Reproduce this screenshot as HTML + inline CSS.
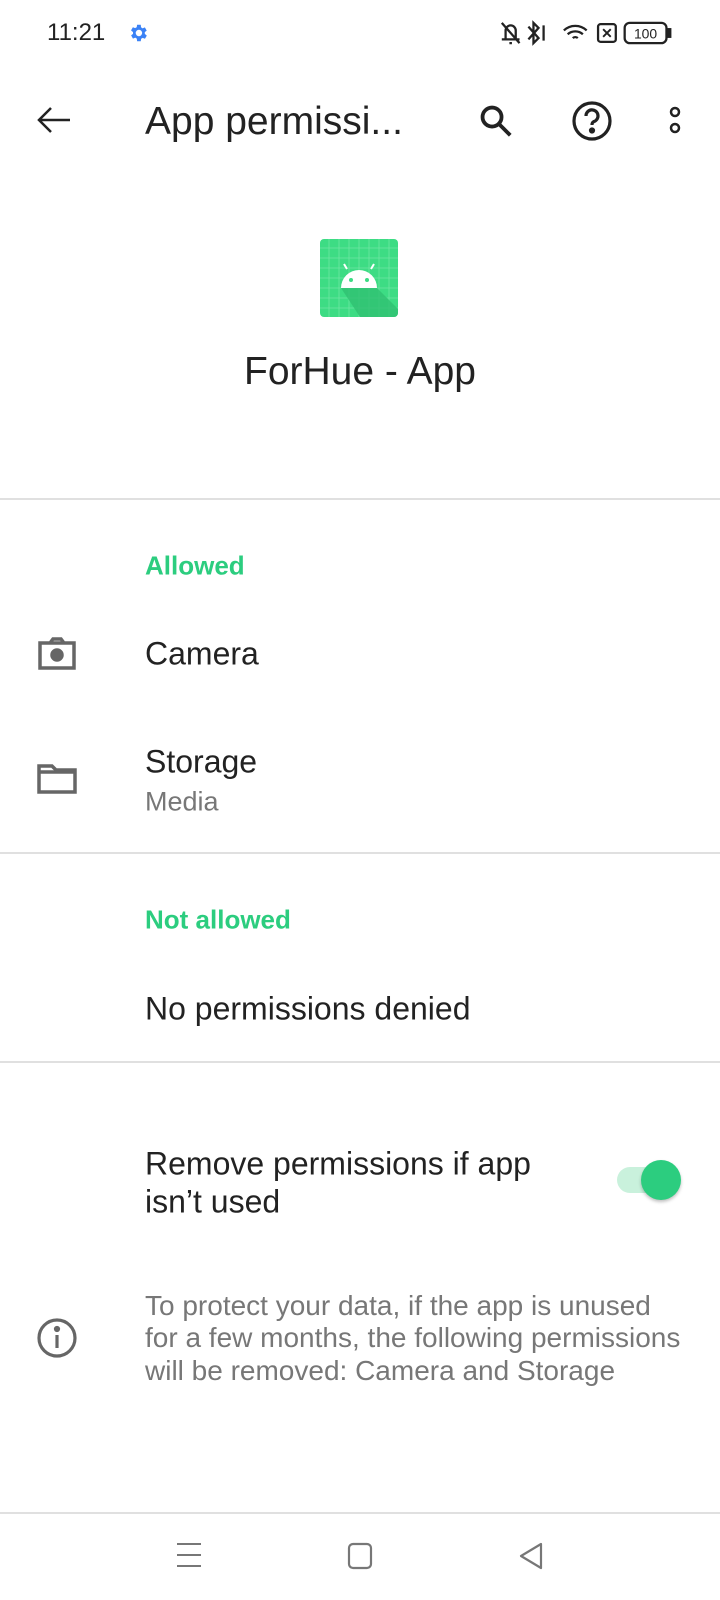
<!DOCTYPE html>
<html><head><meta charset="utf-8"><style>
*{margin:0;padding:0;box-sizing:border-box}
body{width:720px;height:1600px;background:#fff;font-family:"Liberation Sans",sans-serif;position:relative;overflow:hidden;color:#222}
.a{position:absolute;white-space:nowrap}
.t{transform:translateY(-50%)}
.hr{position:absolute;left:0;width:720px;height:2px;background:#e0e0e0}
.g{color:#2ccd7f;font-size:26px;font-weight:bold}
.p{font-size:32px;color:#222}
.s{font-size:27px;color:#777}
</style></head><body>
<div class="a t" style="left:47px;top:33px;font-size:24px;color:#222">11:21</div>
<svg class="a" style="left:127px;top:22px" width="22" height="22" viewBox="0 0 24 24"><path fill="#3b82f6" d="M19.4 13a7.5 7.5 0 000-2l2.1-1.6-2-3.5-2.5 1a7 7 0 00-1.7-1L15 3h-4l-.4 2.7a7 7 0 00-1.7 1l-2.5-1-2 3.5L6.6 11a7.5 7.5 0 000 2l-2.1 1.6 2 3.5 2.5-1a7 7 0 001.7 1L11 21h4l.4-2.7a7 7 0 001.7-1l2.5 1 2-3.5zM13 15.5a3.5 3.5 0 110-7 3.5 3.5 0 010 7z"/></svg>
<svg class="a" style="left:498px;top:19px" width="228" height="28" viewBox="0 0 180 22" fill="none" stroke="#222" stroke-width="1.8">
<path d="M3 16h14M6 16V9a4 4 0 018 0v7M9 19h2M3 3l14 16"/>
<path d="M24 6l8 9-4 4V3l4 4-8 9M36 5v12"/>
<path d="M52 9a13 13 0 0118 0M55 12a9 9 0 0112 0M59 15a3 3 0 014 0"/>
<rect x="79" y="4" width="14" height="14" rx="2"/><path d="M83 8l6 6M89 8l-6 6" stroke-width="1.5"/>
<rect x="100" y="3" width="33" height="16" rx="4"/><rect x="134" y="8" width="2" height="6" fill="#222"/>
<text x="116.5" y="15.5" font-size="11" fill="#222" stroke="none" text-anchor="middle" font-family="Liberation Sans">100</text>
</svg>
<svg class="a" style="left:36px;top:106px" width="36" height="28" viewBox="0 0 36 28" fill="none" stroke="#222" stroke-width="2.5"><path d="M34 14H3M15 2L3 14l12 12"/></svg>
<div class="a t" style="left:145px;top:122px;font-size:39px;color:#222">App permissi...</div>
<svg class="a" style="left:477px;top:102px" width="38" height="38" viewBox="0 0 24 24" fill="none" stroke="#222" stroke-width="2.4"><circle cx="9.5" cy="9.5" r="6"/><path d="M14 14l7 7"/></svg>
<svg class="a" style="left:571px;top:100px" width="42" height="42" viewBox="0 0 42 42" fill="none" stroke="#222" stroke-width="3.2"><circle cx="21" cy="21" r="18"/><path d="M15 16a6 6 0 1 1 8 5.5c-1.5.7-2 1.5-2 3.5"/><circle cx="21" cy="30.5" r="1.5" fill="#222"/></svg>
<svg class="a" style="left:668px;top:105px" width="14" height="30" viewBox="0 0 14 30" fill="none" stroke="#222" stroke-width="2.5"><circle cx="7" cy="7" r="4"/><circle cx="7" cy="23" r="4"/></svg>
<svg class="a" style="left:320px;top:239px" width="78" height="78" viewBox="0 0 78 78">
<rect width="78" height="78" rx="4" fill="#3ddc84"/>
<g stroke="#7ae8aa" stroke-width="0.8" opacity=".8"><path d="M9 0v78M19 0v78M29 0v78M39 0v78M49 0v78M59 0v78M69 0v78M0 9h78M0 19h78M0 29h78M0 39h78M0 49h78M0 59h78M0 69h78"/></g>
<path d="M21 49h36l21 21v4a4 4 0 01-4 4H40z" fill="#2fc172" opacity=".8"/>
<path d="M21 49a18 18 0 0136 0z" fill="#fff"/>
<path d="M27 30l-3-5M51 30l3-5" stroke="#fff" stroke-width="2"/>
<circle cx="31" cy="41" r="2" fill="#3ddc84"/><circle cx="47" cy="41" r="2" fill="#3ddc84"/>
</svg>
<div class="a t" style="left:0;width:720px;text-align:center;top:372px;font-size:39px;color:#222">ForHue - App</div>
<div class="hr" style="top:498px"></div>
<div class="a t g" style="left:145px;top:566px">Allowed</div>
<svg class="a" style="left:36px;top:637px" width="42" height="34" viewBox="0 0 42 34" fill="none" stroke="#666" stroke-width="3.5"><path d="M4 6h34v25H4zM14 6l3-4h8l3 4"/><circle cx="21" cy="18" r="5" fill="#666"/></svg>
<div class="a t p" style="left:145px;top:654px">Camera</div>
<svg class="a" style="left:36px;top:763px" width="42" height="32" viewBox="0 0 42 32" fill="none" stroke="#666" stroke-width="3.5"><path d="M3 3h13l4 4h19v22H3z"/><path d="M3 9h36"/></svg>
<div class="a t p" style="left:145px;top:762px">Storage</div>
<div class="a t s" style="left:145px;top:802px">Media</div>
<div class="hr" style="top:852px"></div>
<div class="a t g" style="left:145px;top:920px">Not allowed</div>
<div class="a t p" style="left:145px;top:1009px">No permissions denied</div>
<div class="hr" style="top:1061px"></div>
<div class="a t p" style="left:145px;top:1164px">Remove permissions if app</div>
<div class="a t p" style="left:145px;top:1202px">isn’t used</div>
<div class="a" style="left:617px;top:1167px;width:56px;height:26px;border-radius:13px;background:#c9f1dc"></div>
<div class="a" style="left:641px;top:1160px;width:40px;height:40px;border-radius:50%;background:#2ccd7f;box-shadow:0 2px 3px rgba(0,0,0,.25)"></div>
<svg class="a" style="left:36px;top:1317px" width="42" height="42" viewBox="0 0 42 42" fill="none" stroke="#666" stroke-width="3.2"><circle cx="21" cy="21" r="18"/><path d="M21 18v13"/><circle cx="21" cy="12" r="1.5" fill="#666"/></svg>
<div class="a t s" style="left:145px;top:1306px;font-size:28px">To protect your data, if the app is unused</div>
<div class="a t s" style="left:145px;top:1338px;font-size:28px">for a few months, the following permissions</div>
<div class="a t s" style="left:145px;top:1371px;font-size:28px">will be removed: Camera and Storage</div>
<div class="hr" style="top:1512px"></div>
<svg class="a" style="left:176px;top:1542px" width="26" height="26" viewBox="0 0 26 26" stroke="#777" stroke-width="2"><path d="M1 2h24M1 13h24M1 24h24"/></svg>
<svg class="a" style="left:347px;top:1542px" width="26" height="28" viewBox="0 0 26 28" fill="none" stroke="#777" stroke-width="2.2"><rect x="2" y="2" width="22" height="24" rx="4"/></svg>
<svg class="a" style="left:518px;top:1542px" width="26" height="28" viewBox="0 0 26 28" fill="none" stroke="#777" stroke-width="2.2" stroke-linejoin="round"><path d="M23 2L3 14l20 12z"/></svg>
</body></html>
